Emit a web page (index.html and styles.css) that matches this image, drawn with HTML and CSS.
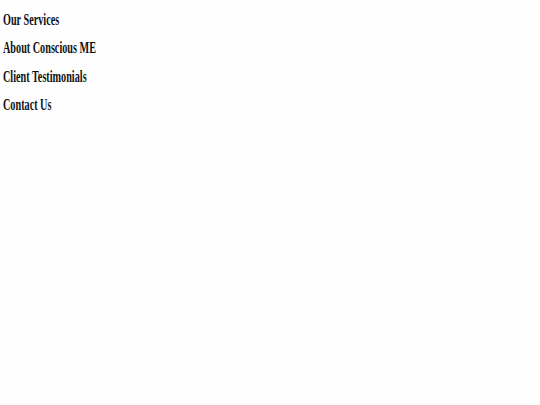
FILE: index.html
```html
<!DOCTYPE html>
<html lang="en">
<head>
<meta charset="utf-8">
<title>Conscious ME</title>
<link rel="stylesheet" href="styles.css">
</head>
<body>
<nav class="menu">
  <h4 class="menu-item"><span class="menu-label">Our Services</span></h4>
  <h4 class="menu-item"><span class="menu-label">About Conscious ME</span></h4>
  <h4 class="menu-item"><span class="menu-label">Client Testimonials</span></h4>
  <h4 class="menu-item"><span class="menu-label">Contact Us</span></h4>
</nav>
</body>
</html>
```
FILE: styles.css
```css
html, body {
  margin: 0;
  padding: 0;
  background: #fefefe;
}
body {
  width: 540px;
  height: 405px;
  font-family: "Liberation Serif", "Times New Roman", serif;
  color: #111;
}
.menu {
  display: flex;
  flex-direction: column;
  gap: 8.6px;
  padding: 9.5px 0 0 3px;
}
.menu-item {
  margin: 0;
  font-size: 17px;
  font-weight: bold;
  line-height: 20px;
  white-space: nowrap;
}
.menu-label {
  display: inline-block;
  transform: scaleX(0.6);
  transform-origin: left center;
}
```
